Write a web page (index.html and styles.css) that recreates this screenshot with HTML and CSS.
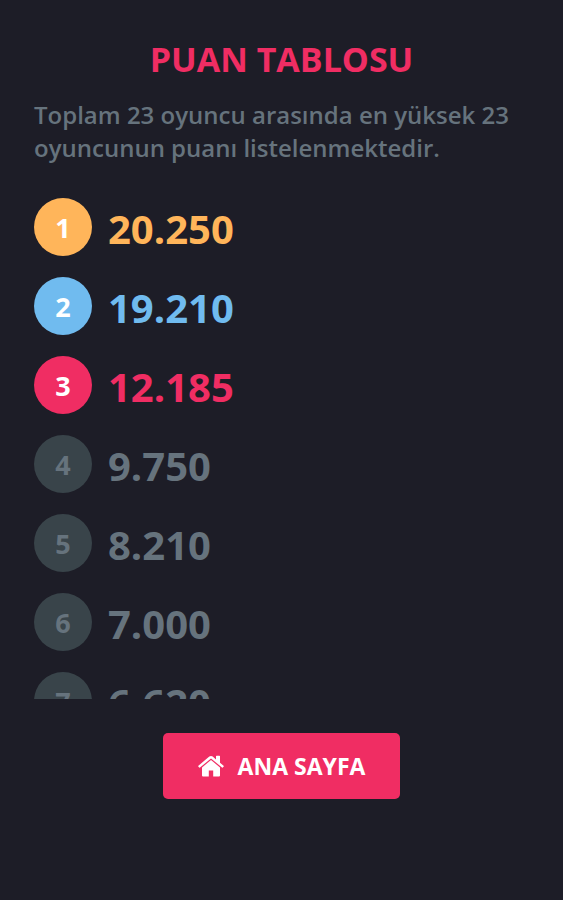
FILE: index.html
```html
<!DOCTYPE html>
<html lang="tr">
<head>
<meta charset="utf-8">
<meta name="viewport" content="width=device-width, initial-scale=1">
<title>Puan Tablosu</title>
<link rel="stylesheet" href="styles.css">
</head>
<body>
<main class="board">
  <h1 class="title">PUAN TABLOSU</h1>
  <p class="summary">Toplam 23 oyuncu arasında en yüksek 23 oyuncunun puanı listelenmektedir.</p>
  <ol class="scores">
    <li class="score gold"><span class="rank">1</span><span class="points">20.250</span></li>
    <li class="score blue"><span class="rank">2</span><span class="points">19.210</span></li>
    <li class="score pink"><span class="rank">3</span><span class="points">12.185</span></li>
    <li class="score"><span class="rank">4</span><span class="points">9.750</span></li>
    <li class="score"><span class="rank">5</span><span class="points">8.210</span></li>
    <li class="score"><span class="rank">6</span><span class="points">7.000</span></li>
    <li class="score"><span class="rank">7</span><span class="points">6.620</span></li>
  </ol>
  <a class="home" href="#">
    <svg class="home-icon" viewBox="0 0 26 22" aria-hidden="true">
      <path d="M13 5 4 12.400V20.500Q4 21.500 5 21.500H10.800V15.500H15.200V21.500H21Q22 21.500 22 20.500V12.400Z"/>
      <path d="M25.600 10.700 22 7.700V1.300Q22 .7 21.400 .7H18.600Q18 .7 18 1.300V4.400L14.700 1.600Q13 .3 11.300 1.600L.4 10.700Q0 11.100 .3 11.500L1.200 12.500Q1.600 12.800 2 12.500L13 3.500 24 12.500Q24.400 12.800 24.800 12.500L25.700 11.500Q26 11.100 25.600 10.700Z"/>
    </svg>
    <span>ANA SAYFA</span>
  </a>
</main>
</body>
</html>
```

FILE: styles.css
```css
* {
  box-sizing: border-box;
}

body {
  margin: 0;
  background: #1d1d27;
  color: #66737d;
  font-family: "Open Sans", "Noto Sans", sans-serif;
}

.board {
  display: flex;
  flex-direction: column;
  min-height: 100vh;
  padding: 36px 34px 0;
}

.title {
  margin: 0;
  color: #f02d63;
  font-size: 34px;
  font-weight: 700;
  line-height: 46px;
  text-align: center;
}

.summary {
  margin: 16px 0 34px;
  font-size: 24px;
  font-weight: 600;
  line-height: 33px;
}

.scores {
  display: flex;
  flex-direction: column;
  gap: 21px;
  height: calc(100vh - 399px);
  margin: 0;
  padding: 0;
  overflow-y: auto;
  scrollbar-width: none;
  list-style: none;
}

.score {
  display: flex;
  flex: none;
  align-items: center;
  gap: 16px;
}

.rank {
  display: grid;
  place-items: center;
  width: 58px;
  height: 58px;
  border-radius: 50%;
  background: #39444a;
  font-size: 27px;
  font-weight: 700;
}

.points {
  padding-top: 4px;
  font-size: 40px;
  font-weight: 700;
  line-height: 54px;
}

.gold,
.blue,
.pink {
  color: #ffb55a;
}

.blue {
  color: #70bbef;
}

.pink {
  color: #f02d63;
}

.gold .rank,
.blue .rank,
.pink .rank {
  background: #ffb55a;
  color: #fff;
}

.blue .rank {
  background: #70bbef;
}

.pink .rank {
  background: #f02d63;
}

.home {
  display: flex;
  align-items: center;
  align-self: center;
  gap: 14px;
  margin-top: 34px;
  padding: 16px 35px;
  border-radius: 5px;
  background: #f02d63;
  color: #fff;
  font-size: 23px;
  font-weight: 700;
  line-height: 34px;
  text-decoration: none;
  white-space: nowrap;
}

.home-icon {
  width: 26px;
  height: 22px;
  fill: currentColor;
}
```
